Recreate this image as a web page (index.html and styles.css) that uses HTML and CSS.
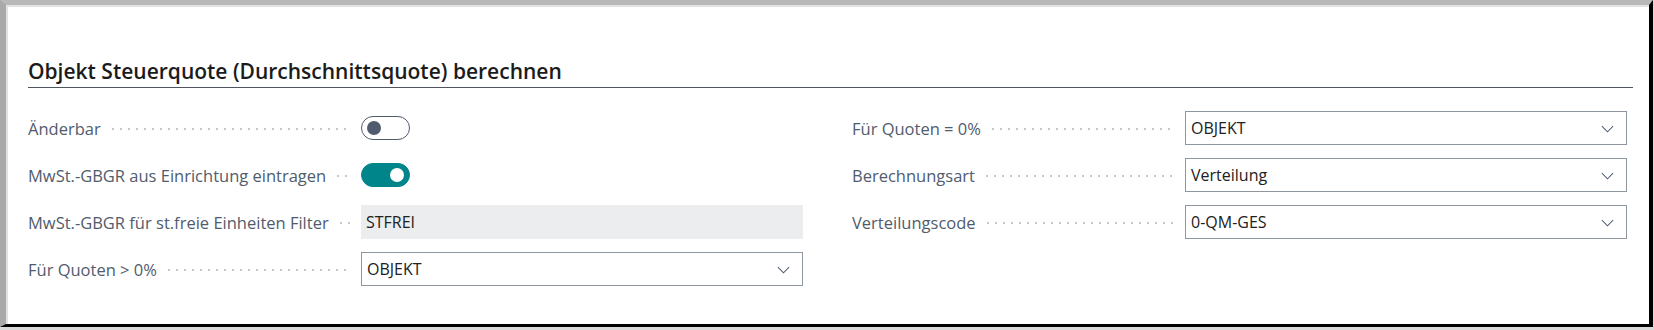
FILE: index.html
```html
<!DOCTYPE html>
<html lang="de">
<head>
    <meta charset="UTF-8">
    <meta name="viewport" content="width=device-width, initial-scale=1.0">
    <title>Objekt Steuerquote berechnen</title>
    <link rel="stylesheet" href="styles.css">
</head>
<body>
    <div class="window">
        <section class="group">
            <h2 class="group-title">Objekt Steuerquote (Durchschnittsquote) berechnen</h2>

            <div class="columns">
                <!-- linke Spalte -->
                <div class="column">
                    <div class="field">
                        <span class="caption">Änderbar</span>
                        <span class="control"><span class="toggle"></span></span>
                    </div>
                    <div class="field">
                        <span class="caption">MwSt.-GBGR aus Einrichtung eintragen</span>
                        <span class="control"><span class="toggle on"></span></span>
                    </div>
                    <div class="field">
                        <span class="caption">MwSt.-GBGR für st.freie Einheiten Filter</span>
                        <span class="control"><span class="readonly">STFREI</span></span>
                    </div>
                    <div class="field">
                        <span class="caption">Für Quoten &gt; 0%</span>
                        <span class="control">
                            <span class="select">OBJEKT
                                <svg class="chevron" viewBox="0 0 16 16"><path d="M2 5.5l6 6 6-6" /></svg>
                            </span>
                        </span>
                    </div>
                </div>

                <!-- rechte Spalte -->
                <div class="column">
                    <div class="field">
                        <span class="caption">Für Quoten = 0%</span>
                        <span class="control">
                            <span class="select">OBJEKT
                                <svg class="chevron" viewBox="0 0 16 16"><path d="M2 5.5l6 6 6-6" /></svg>
                            </span>
                        </span>
                    </div>
                    <div class="field">
                        <span class="caption">Berechnungsart</span>
                        <span class="control">
                            <span class="select">Verteilung
                                <svg class="chevron" viewBox="0 0 16 16"><path d="M2 5.5l6 6 6-6" /></svg>
                            </span>
                        </span>
                    </div>
                    <div class="field">
                        <span class="caption">Verteilungscode</span>
                        <span class="control">
                            <span class="select">0-QM-GES
                                <svg class="chevron" viewBox="0 0 16 16"><path d="M2 5.5l6 6 6-6" /></svg>
                            </span>
                        </span>
                    </div>
                </div>
            </div>
        </section>
    </div>
</body>
</html>
```

FILE: styles.css
```css
html, body {
    margin: 0;
    padding: 0;
    background: #d9d9d9;
}
body {
    width: 1654px;
    height: 330px;
    font-family: "Open Sans", "Noto Sans", Arial, sans-serif;
    color: #212121;
}
.window {
    box-sizing: border-box;
    height: 327px;
    width: 1653px;
    background: #fff;
    border-top: 5px solid #b8b8b8;
    border-left: 6px solid #a9a9a9;
    border-right: 4px solid #000;
    border-bottom: 3px solid #000;
    box-shadow: inset 2px 2px 0 #e2e2e2;
}
.group {
    padding: 53px 16px 0 22px;
}
.group-title {
    margin: 0;
    font-size: 21px;
    font-weight: 600;
    line-height: 26px;
    color: #1b1b1b;
    padding-bottom: 3px;
    border-bottom: 1px solid #4f5560;
}
.columns {
    display: grid;
    grid-template-columns: 775px 775px;
    column-gap: 49px;
    padding-top: 23px;
}
.column {
    display: flex;
    flex-direction: column;
    gap: 13px;
}
.field {
    display: flex;
    align-items: center;
    height: 34px;
}
.caption {
    width: 323px;
    display: flex;
    align-items: center;
    font-size: 16.5px;
    color: #505c6d;
    white-space: nowrap;
    overflow: hidden;
}
.caption::after {
    content: "";
    flex: 1;
    height: 4px;
    margin: 2px 0 0 8px;
    background-image: radial-gradient(circle, #c3c6cb 1px, transparent 1.4px);
    background-size: 8px 4px;
    background-repeat: repeat-x;
}
.control {
    margin-left: 10px;
    flex: 1;
    display: flex;
    align-items: center;
}
.toggle {
    box-sizing: border-box;
    position: relative;
    width: 49px;
    height: 24px;
    border: 1px solid #505c6d;
    border-radius: 12px;
    background: #fff;
}
.toggle::after {
    content: "";
    position: absolute;
    top: 4px;
    left: 5px;
    width: 14px;
    height: 14px;
    border-radius: 50%;
    background: #505c6d;
}
.toggle.on {
    background: #00858a;
    border-color: #00858a;
}
.toggle.on::after {
    left: auto;
    right: 5px;
    background: #fff;
}
.readonly,
.select {
    box-sizing: border-box;
    flex: 1;
    height: 34px;
    display: flex;
    align-items: center;
    padding: 0 5px;
    font-size: 16px;
    color: #212121;
}
.readonly {
    background: #ebedef;
}
.select {
    border: 1px solid #8e96a0;
    justify-content: space-between;
    background: #fff;
}
.chevron {
    width: 15px;
    height: 15px;
    margin-right: 6px;
    fill: none;
    stroke: #505c6d;
    stroke-width: 1.1;
}
```
